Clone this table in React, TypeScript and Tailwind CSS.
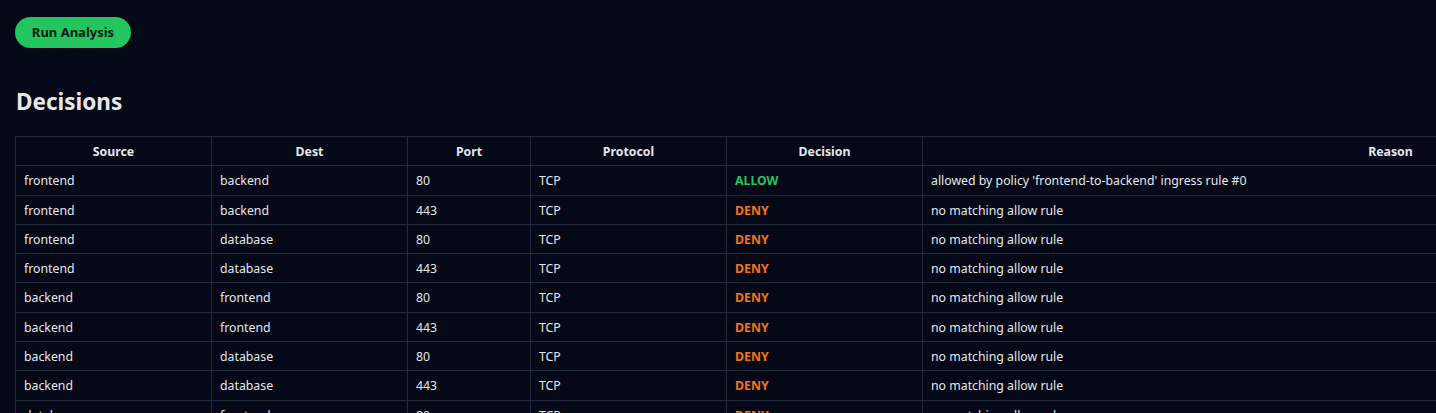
import React from 'react';

type Row = { src: string; dst: string; port: number; proto: string; decision: 'ALLOW' | 'DENY'; reason: string };

const rows: Row[] = [
  { src: 'frontend', dst: 'backend', port: 80, proto: 'TCP', decision: 'ALLOW', reason: "allowed by policy 'frontend-to-backend' ingress rule #0" },
  { src: 'frontend', dst: 'backend', port: 443, proto: 'TCP', decision: 'DENY', reason: 'no matching allow rule' },
  { src: 'frontend', dst: 'database', port: 80, proto: 'TCP', decision: 'DENY', reason: 'no matching allow rule' },
  { src: 'frontend', dst: 'database', port: 443, proto: 'TCP', decision: 'DENY', reason: 'no matching allow rule' },
  { src: 'backend', dst: 'frontend', port: 80, proto: 'TCP', decision: 'DENY', reason: 'no matching allow rule' },
  { src: 'backend', dst: 'frontend', port: 443, proto: 'TCP', decision: 'DENY', reason: 'no matching allow rule' },
  { src: 'backend', dst: 'database', port: 80, proto: 'TCP', decision: 'DENY', reason: 'no matching allow rule' },
  { src: 'backend', dst: 'database', port: 443, proto: 'TCP', decision: 'DENY', reason: 'no matching allow rule' },
  { src: 'database', dst: 'frontend', port: 80, proto: 'TCP', decision: 'DENY', reason: 'no matching allow rule' },
  { src: 'database', dst: 'frontend', port: 443, proto: 'TCP', decision: 'DENY', reason: 'no matching allow rule' },
];

const th = 'border border-[#1f2937] px-2 pt-[7px] pb-[5px] text-center font-bold leading-[16.3px]';
const td = 'border border-[#1f2937] px-2 pt-[7px] pb-[5px] text-left leading-[16.3px]';

export default function App() {
  return (
    <div
      className="min-h-screen w-[1880px] bg-[#050816] px-[15px] pt-[17px] pb-4 text-[12.3px] text-[#e5e7eb]"
      style={{ fontFamily: '"Noto Sans", "Open Sans", sans-serif' }}
    >
      <button className="h-[31px] w-[116px] rounded-full bg-[#22c55e] text-[13px] font-bold text-[#0b1a12]">
        Run Analysis
      </button>

      <h2 className="mt-[38px] mb-[18px] pl-px text-[22.5px] leading-8 font-bold text-[#e5e7eb]">Decisions</h2>

      <table className="table-fixed border-collapse">
        <colgroup>
          <col className="w-[196px]" />
          <col className="w-[196px]" />
          <col className="w-[123px]" />
          <col className="w-[196px]" />
          <col className="w-[196px]" />
          <col className="w-[936px]" />
        </colgroup>
        <thead>
          <tr>
            <th className={th}>Source</th>
            <th className={th}>Dest</th>
            <th className={th}>Port</th>
            <th className={th}>Protocol</th>
            <th className={th}>Decision</th>
            <th className={th}>Reason</th>
          </tr>
        </thead>
        <tbody>
          {rows.map((r, i) => (
            <tr key={i}>
              <td className={td}>{r.src}</td>
              <td className={td}>{r.dst}</td>
              <td className={td}>{r.port}</td>
              <td className={td}>{r.proto}</td>
              <td className={td}>
                {r.decision === 'ALLOW' ? (
                  <span className="font-bold text-[#22c55e]">ALLOW</span>
                ) : (
                  <span className="font-bold text-[#f97316]">DENY</span>
                )}
              </td>
              <td className={td}>{r.reason}</td>
            </tr>
          ))}
        </tbody>
      </table>
    </div>
  );
}
